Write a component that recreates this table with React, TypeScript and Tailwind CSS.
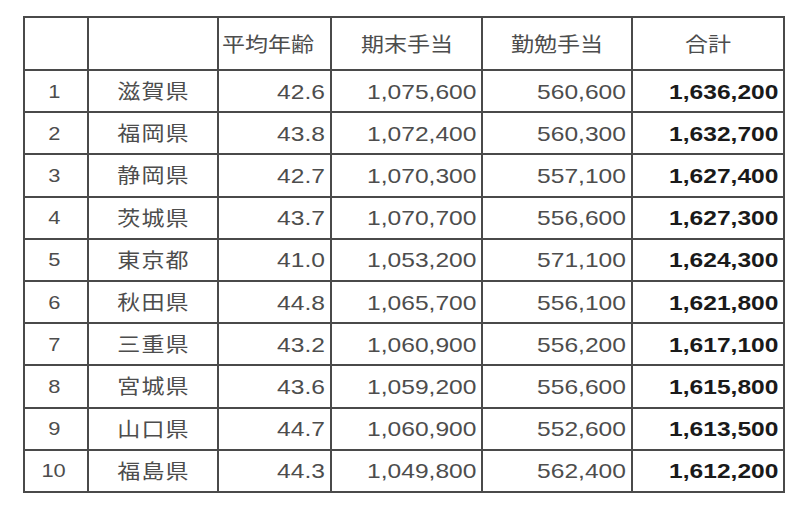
import React from "react";

const rows: [string, string, string, string, string, string][] = [
  ["1", "滋賀県", "42.6", "1,075,600", "560,600", "1,636,200"],
  ["2", "福岡県", "43.8", "1,072,400", "560,300", "1,632,700"],
  ["3", "静岡県", "42.7", "1,070,300", "557,100", "1,627,400"],
  ["4", "茨城県", "43.7", "1,070,700", "556,600", "1,627,300"],
  ["5", "東京都", "41.0", "1,053,200", "571,100", "1,624,300"],
  ["6", "秋田県", "44.8", "1,065,700", "556,100", "1,621,800"],
  ["7", "三重県", "43.2", "1,060,900", "556,200", "1,617,100"],
  ["8", "宮城県", "43.6", "1,059,200", "556,600", "1,615,800"],
  ["9", "山口県", "44.7", "1,060,900", "552,600", "1,613,500"],
  ["10", "福島県", "44.3", "1,049,800", "562,400", "1,612,200"],
];

const cjk = "font-['Noto_Sans_CJK_JP',sans-serif]";
const num = "font-['Liberation_Sans','Noto_Sans_CJK_JP',sans-serif]";

export default function App() {
  return (
    <div className="w-[800px] h-[510px] bg-white pt-[16px] pl-[23px]">
      <table className="table-fixed border-collapse w-[760px] text-[#4d4d4d]">
        <colgroup>
          <col className="w-[64px]" />
          <col className="w-[130px]" />
          <col className="w-[113px]" />
          <col className="w-[151px]" />
          <col className="w-[150px]" />
          <col className="w-[152px]" />
        </colgroup>
        <thead>
          <tr className="h-[53px]">
            <th className="border-2 border-[#4a4a4a]"></th>
            <th className="border-2 border-[#4a4a4a]"></th>
            {["平均年齢", "期末手当", "勤勉手当", "合計"].map((h, i) => (
              <th
                key={h}
                className={`border-2 border-[#4a4a4a] font-normal text-[20px] leading-none ${cjk} ${i === 0 ? "text-left pl-[3px]" : "text-center"}`}
              >
                <span className={`inline-block scale-x-[1.15] ${i === 0 ? "origin-left" : "origin-center"}`}>{h}</span>
              </th>
            ))}
          </tr>
        </thead>
        <tbody>
          {rows.map((r) => (
            <tr key={r[0]} className="h-[42.2px]">
              <td className={`border-2 border-[#4a4a4a] text-center text-[19px] leading-none ${num}`}>
                <span className="inline-block scale-x-[1.15] -translate-x-[2px]">{r[0]}</span>
              </td>
              <td className={`border-2 border-[#4a4a4a] text-center text-[20px] leading-none ${cjk}`}>
                <span className="inline-block scale-x-[1.15] tracking-[1px]">{r[1]}</span>
              </td>
              {[r[2], r[3], r[4]].map((v, i) => (
                <td key={i} className={`border-2 border-[#4a4a4a] text-right pr-[5px] text-[21px] leading-none ${num}`}>
                  <span className="inline-block scale-x-[1.17] origin-right">{v}</span>
                </td>
              ))}
              <td className={`border-2 border-[#4a4a4a] text-right pr-[5px] text-[21px] leading-none font-bold text-[#1a1a1a] ${num}`}>
                <span className="inline-block scale-x-[1.17] origin-right">{r[5]}</span>
              </td>
            </tr>
          ))}
        </tbody>
      </table>
    </div>
  );
}
